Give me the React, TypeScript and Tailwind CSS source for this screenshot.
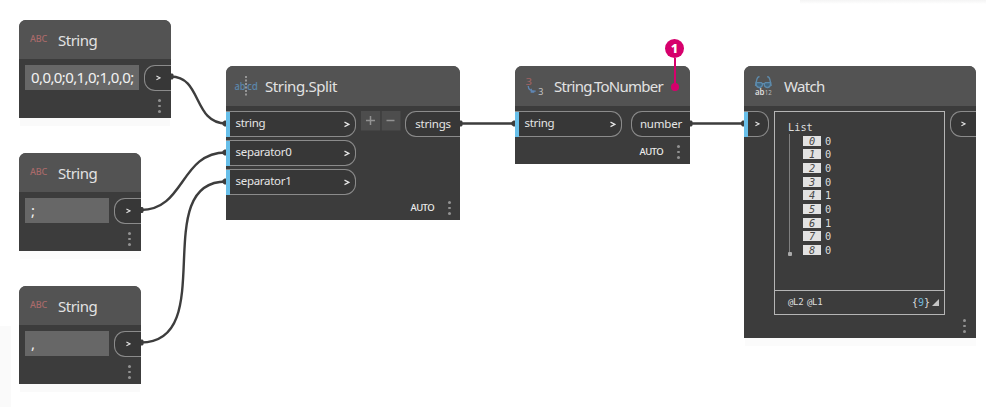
import React from "react";

function Dots({ className = "" }: { className?: string }) {
  return (
    <span className={`flex w-[3px] flex-col gap-[3px] ${className}`}>
      <i className="h-[2.5px] w-[2.5px] rounded-full bg-[#929292]" />
      <i className="h-[2.5px] w-[2.5px] rounded-full bg-[#929292]" />
      <i className="h-[2.5px] w-[2.5px] rounded-full bg-[#929292]" />
    </span>
  );
}

function Chevron({ small = false }: { small?: boolean }) {
  return (
    <svg width={small ? 5 : 6} height={small ? 6 : 7} viewBox="0 0 6 7" fill="none" stroke="#e4e4e4" strokeWidth="1.3">
      <path d="M.5 1.1 5 3.4.5 5.7" />
    </svg>
  );
}

function NodeCard({
  place,
  icon,
  title,
  titleClass,
  children,
}: {
  place: string;
  icon: React.ReactNode;
  title: string;
  titleClass: string;
  children: React.ReactNode;
}) {
  return (
    <section className={`absolute flex flex-col overflow-hidden rounded-t-[7px] bg-[#3c3c3c] ${place}`}>
      <header className="flex shrink-0 items-center bg-[#535353] text-[#e2e2e2]">
        {icon}
        <h2 className={`whitespace-nowrap text-[15px] leading-[20px] ${titleClass}`}>{title}</h2>
      </header>
      {children}
    </section>
  );
}

function InPort({ label, width }: { label: string; width: string }) {
  return (
    <div className={`flex h-[26px] items-center rounded-r-[11px] border border-l-0 border-[#8b8b8b] bg-[#373737] ${width}`}>
      <span className="h-[25px] w-[4px] shrink-0 bg-[#68bfe9]" />
      <span className="-mt-[2px] ml-[5.5px] flex-1 text-[11.5px] leading-[16px] tracking-[-0.3px] text-[#e6e6e6]">{label}</span>
      <span className="mr-[5px]">
        <Chevron />
      </span>
    </div>
  );
}

function OutPort({ label, width }: { label?: string; width: string }) {
  return (
    <div className={`flex h-[26px] shrink-0 items-center justify-center rounded-l-[11px] border border-r-0 border-[#8b8b8b] bg-[#373737] text-[11.5px] leading-[16px] tracking-[-0.2px] text-[#e6e6e6] ${width}`}>
      {label ?? <Chevron small />}
    </div>
  );
}

function StringNode({ place, value, valueClass }: { place: string; value: string; valueClass: string }) {
  return (
    <NodeCard
      place={place}
      title="String"
      titleClass="ml-[10px] py-[10px] h-[39px] w-[60px] tracking-[-0.5px]"
      icon={
        <span className="-mt-[2px] ml-[11px] w-[18px] shrink-0 text-[9px] font-medium leading-[12px] tracking-[-0.2px] text-[#a96a6a]">
          ABC
        </span>
      }
    >
      <div className="flex gap-[5px] pl-[6px] pt-[6px]">
        <div className={`flex h-[25px] flex-1 items-center whitespace-nowrap bg-[#676767] pb-[2px] pl-[6px] text-[15px] leading-[20px] text-[#f2f2f2] ${valueClass}`}>
          {value}
        </div>
        <OutPort width="w-[27px]" />
      </div>
      <Dots className="mr-[10px] mt-[8px] self-end" />
    </NodeCard>
  );
}

function Auto({ className }: { className: string }) {
  return (
    <div className={`flex items-center justify-end gap-[14px] text-[9.5px] font-medium leading-[14px] text-[#ececec] ${className}`}>
      <span className="tracking-[-0.6px]">AUTO</span>
      <Dots />
    </div>
  );
}

function SplitIcon() {
  return (
    <svg className="ml-[8px] shrink-0" width="26" height="22" viewBox="0 0 26 22">
      <g fill="#5b87ab" fontFamily="Noto Sans, sans-serif" fontSize="11" fontWeight="500">
        <text x="0.500" y="14.5" textLength="11" lengthAdjust="spacingAndGlyphs">ab</text>
        <text x="13" y="14.5" textLength="11" lengthAdjust="spacingAndGlyphs">cd</text>
      </g>
      <path d="M12 1v20" stroke="#c4c4c4" strokeWidth="1.2" strokeDasharray="2 1.5" />
    </svg>
  );
}

function ToNumberIcon() {
  return (
    <svg className="ml-[10px] shrink-0" width="20" height="24" viewBox="0 -3 20 24">
      <text x="0.500" y="7.5" fill="#a46363" fontFamily="Noto Sans, sans-serif" fontSize="9.5" textLength="6.5" lengthAdjust="spacingAndGlyphs">3</text>
      <path d="M3.2 9c.2 3.9 2.2 5.4 7.5 5.2M6.300 11.700v3.300h3" fill="none" stroke="#5f86b4" strokeWidth="1.3" />
      <text x="13.2" y="17.5" fill="#c4c4c4" fontFamily="Noto Sans, sans-serif" fontSize="9">3</text>
    </svg>
  );
}

function WatchIcon() {
  return (
    <svg className="ml-[10px] shrink-0" width="20" height="20" viewBox="0 0 20 20">
      <g fill="none" stroke="#5d8aab" strokeWidth="1.400">
        <path d="M5.5.8C3.200.6 2.800 3 2.400 5.500L1.500 10M13.200.8c2.300-.2 2.700 2.200 3.100 4.700l.9 4.500" />
        <path d="M2.200 6.600h5l1.300 1.200c0 4.800-6.300 4.800-6.300.300zM16.500 6.600h-5l-1.300 1.200c0 4.800 6.300 4.800 6.300.300zM8 7.600h2.700" fill="#416680" />
      </g>
      <text x="1" y="18.5" fill="#dedede" fontFamily="Noto Sans, sans-serif" fontSize="8.5" fontWeight="600" textLength="9.5" lengthAdjust="spacingAndGlyphs">ab</text>
      <text x="10.7" y="18.5" fill="#bcbcbc" fontFamily="Noto Sans, sans-serif" fontSize="6.7" textLength="7" lengthAdjust="spacingAndGlyphs">12</text>
    </svg>
  );
}

const items = [0, 0, 0, 0, 1, 0, 1, 0, 0];

function WatchPanel() {
  return (
    <div className="ml-[5px] flex h-[204px] w-[171px] shrink-0 flex-col border border-[#b5b5b5] font-['DejaVu_Sans_Mono','Liberation_Mono',monospace] text-[10.3px] text-[#dedede]">
      <div className="flex-1 pl-[13px] pt-[9px]">
        <div className="h-[12px] leading-[13px]">List</div>
        <div className="flex">
          <div className="flex w-[3px] flex-col items-center pt-px">
            <span className="h-[118px] w-px bg-[#808080]" />
            <span className="h-[4px] w-[4px] rounded-[1px] bg-[#aaa]" />
          </div>
          <div className="ml-[12px] pt-px">
            {items.map((item, index) => (
              <div key={index} className="flex h-[13.65px] items-center gap-[4px]">
                <span className="flex h-[10px] w-[18px] items-center justify-center bg-[#e2e2e2] italic leading-[10px] text-[#484848]">{index}</span>
                <span className="leading-[12px]">{item}</span>
              </div>
            ))}
          </div>
        </div>
      </div>
      <footer className="flex h-[24px] items-center justify-between border-t border-[#b5b5b5] pl-[13px] pr-[5px]">
        <span className="text-[9px] tracking-[-0.3px] [word-spacing:-1.5px]">@L2 @L1</span>
        <span className="flex items-center gap-[2px]">
          <span className="text-[10px]">{"{"}<b className="font-normal text-[#6db6da]">9</b>{"}"}</span>
          <svg width="7" height="7" viewBox="0 0 7 7"><path d="M7 0v7H0z" fill="#c5c5c5" /></svg>
        </span>
      </footer>
    </div>
  );
}

function Wires() {
  return (
    <svg className="absolute left-0 top-0" width="986" height="407" viewBox="0 0 986 407">
      <g fill="none" stroke="#3d3d3d" strokeWidth="2.4">
        <path d="M171 76.5C202 76.5 193 123.5 226 123.5" />
        <path d="M141 210C185 210 180 152.500 226 152.500" />
        <path d="M141 342.500C220 342.500 148 181.500 226 181.500" />
        <path d="M460 123.500H515M690 123.500H744" />
      </g>
      <g fill="#3d3d3d">
        <path d="M171 73.500h1.500l1 1v4l-1 1H171zM141 207h1.500l1 1v4l-1 1H141zM141 339.500h1.500l1 1v4l-1 1H141zM460 120.500h1.500l1 1v4l-1 1H460zM690 120.500h1.500l1 1v4l-1 1H690z" />
        <path d="M226 120.500h-1.500l-2 1.500v3l2 1.500h1.500zM226 149.500h-1.500l-2 1.500v3l2 1.500h1.500zM226 178.500h-1.500l-2 1.500v3l2 1.500h1.500zM515 120.500h-1.500l-2 1.500v3l2 1.500h1.500zM744 120.500h-1.500l-1.500 1.500v3l1.500 1.500h1.500z" />
      </g>
    </svg>
  );
}

export default function App() {
  return (
    <main className="relative h-[407px] w-[986px] overflow-hidden bg-white font-['Noto_Sans','Open_Sans',sans-serif]">
      <div className="absolute left-[800px] top-0 h-[4px] w-[186px] bg-gradient-to-b from-[#f4f4f4] to-white" />
      <div className="absolute left-0 top-[326px] h-[81px] w-[11px] bg-[#fafafa]" />
      <div className="absolute left-[20px] top-[118px] h-[8px] w-[150px] bg-[#fafafa]" />
      <div className="absolute left-[20px] top-[251px] h-[8px] w-[120px] bg-[#fcfcfc]" />
      <div className="absolute left-[20px] top-[384px] h-[8px] w-[120px] bg-[#fafafa]" />
      <div className="absolute left-[745px] top-[338px] h-[8px] w-[231px] bg-[#fbfbfb]" />
      <Wires />

      <StringNode place="left-[19px] top-[20px] h-[98px] w-[152px]" value="0,0,0;0,1,0;1,0,0;" valueClass="tracking-[-0.6px]" />
      <StringNode place="left-[19px] top-[153px] h-[98px] w-[122px]" value=";" valueClass="" />
      <StringNode place="left-[19px] top-[286px] h-[98px] w-[122px]" value="," valueClass="" />

      <NodeCard place="left-[226px] top-[66px] h-[154px] w-[234px]" icon={<SplitIcon />} title="String.Split" titleClass="ml-[5px] h-[40px] py-[10px] tracking-[-0.4px]">
        <div className="flex items-start pt-[5px]">
          <div className="flex flex-col gap-[3px]">
            <InPort label="string" width="w-[130px]" />
            <InPort label="separator0" width="w-[130px]" />
            <InPort label="separator1" width="w-[130px]" />
          </div>
          <svg className="ml-[5px] mr-auto" width="40" height="20" viewBox="0 0 40 20">
            <path d="M0 0h19.300v19.500H0zM20.700 0H39.500v19.500H20.700z" fill="#4d4d4d" />
            <path d="M5 9.500h9M9.500 5v9M25.500 9.500h8" stroke="#929292" strokeWidth="1.500" />
          </svg>
          <OutPort label="strings" width="w-[55px]" />
        </div>
        <Auto className="mt-[6px] pr-[9px]" />
      </NodeCard>

      <NodeCard place="left-[515px] top-[66px] h-[98px] w-[175px]" icon={<ToNumberIcon />} title="String.ToNumber" titleClass="ml-[9px] h-[40px] py-[10px] tracking-[-0.75px]">
        <div className="flex justify-between pt-[5px]">
          <InPort label="string" width="w-[107px]" />
          <OutPort label="number" width="w-[59px]" />
        </div>
        <Auto className="mt-[8px] pr-[10px]" />
      </NodeCard>

      <NodeCard place="left-[744px] top-[66px] h-[272px] w-[232px]" icon={<WatchIcon />} title="Watch" titleClass="ml-[10px] h-[40px] py-[10px] tracking-[-0.7px]">
        <div className="flex items-start pt-[5px]">
          <div className="flex h-[26px] w-[25px] items-center rounded-r-[11px] border border-l-0 border-[#8b8b8b] bg-[#373737]">
            <span className="mr-[7px] h-[25px] w-[4px] bg-[#68bfe9]" />
            <Chevron small />
          </div>
          <WatchPanel />
          <div className="ml-auto">
            <OutPort width="w-[26px]" />
          </div>
        </div>
        <Dots className="mr-[10px] mt-[4px] self-end" />
      </NodeCard>

      <div className="absolute left-[665px] top-[39px] flex w-[19px] flex-col items-center">
        <span className="flex h-[19px] w-[19px] items-center justify-center rounded-full bg-[#d6006c] text-[13px] font-extrabold leading-none text-white">1</span>
        <span className="h-[26px] w-[2px] bg-[#d6006c]" />
        <span className="-mt-px h-[8px] w-[8px] rounded-full bg-[#d6006c]" />
      </div>
    </main>
  );
}
